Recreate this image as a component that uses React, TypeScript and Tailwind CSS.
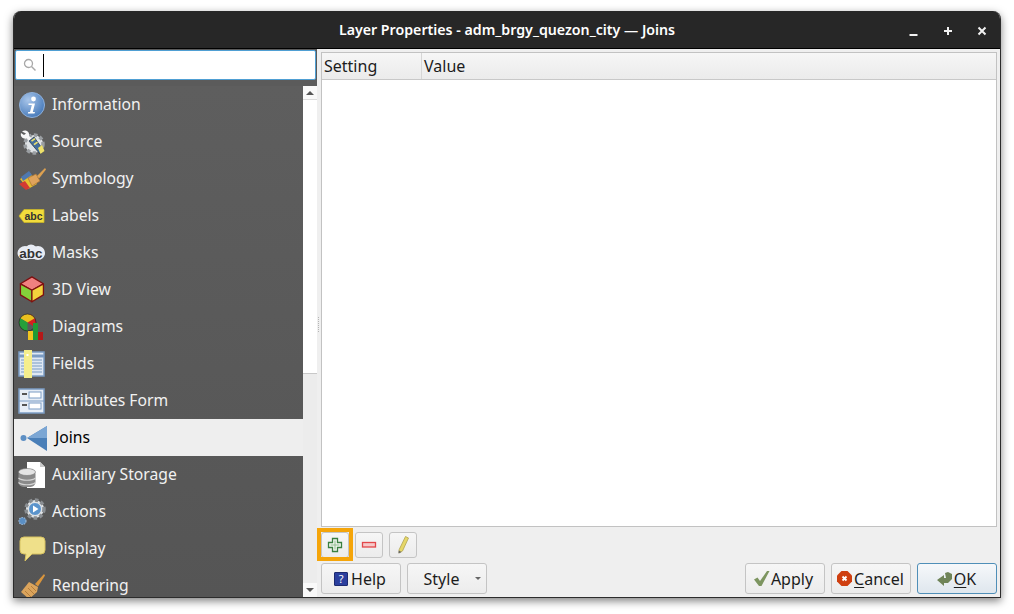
import React from "react";

const S = ({ children, w = 28, h = 28 }: { children: React.ReactNode; w?: number; h?: number }) => (
  <svg width={w} height={h} viewBox={`0 0 ${w} ${h}`} className="block shrink-0">{children}</svg>
);

const InfoIcon = () => (
  <S>
    <defs>
      <radialGradient id="ig" cx="0.35" cy="0.3" r="0.8"><stop offset="0" stopColor="#a9c6ea" /><stop offset="1" stopColor="#3f74b6" /></radialGradient>
    </defs>
    <circle cx="14" cy="14" r="12.5" fill="url(#ig)" stroke="#8fb0da" />
    <circle cx="15.5" cy="8" r="2.4" fill="#fff" />
    <path d="M10.5 12.5h6.5l-2.2 8.5h2.2l-.5 1.6H9.8l.5-1.6h1.7l1.8-6.9h-3.3z" fill="#fff" />
  </S>
);
const SourceIcon = () => (
  <S>
    <circle cx="16" cy="16" r="9" fill="#dfe3e6" stroke="#9a9ea2" strokeWidth="3.500" strokeDasharray="3.500 2.500" />
    <path d="M4 3.500c4-2.500 8 .5 7 4.500l4 3.500-2 2.500-4-3.500c-4 1-7-2-6-5.500l3 2 2-1.500z" fill="#f6f6f6" />
    <path d="M11 13l5-4 10 14-4 3z" fill="#456f9c" stroke="#22303e" strokeWidth=".7" />
    <path d="M20 20l4-3 2.500 6-4 3z" fill="#eee06a" />
    <path d="M13 12.500l3.500-2.500 1 1.300-3.500 2.500zM15.500 16l3.500-2.500 1 1.300-3.500 2.500z" fill="#eee06a" />
  </S>
);
const SymIcon = () => (
  <S>
    <path d="M2 14 12 8l7 11-9 5z" fill="#e6c030" />
    <path d="M3 12l8-6 3 4-9 6z" fill="#4e78b0" />
    <path d="M1 19l6-3 5 7-4 2z" fill="#d33a32" />
    <path d="M10 13l8-4 4 7-8 5z" fill="#dfa35c" stroke="#a87434" strokeWidth=".7" />
    <path d="M19 11l8-8 1 1.500-7 9z" fill="#dca050" />
  </S>
);
const LabelsIcon = () => (
  <S h={16}>
    <path d="M6 1.500h20v13H6L1 8z" fill="#f2dc3c" stroke="#c9b52a" strokeWidth=".8" />
    <text x="15.500" y="12" textAnchor="middle" fontSize="10.500" fontWeight="700" fontFamily="'Liberation Sans',sans-serif" fill="#333">abc</text>
  </S>
);
const MasksIcon = () => (
  <S w={30} h={18}>
    <rect x="0.500" y="3" width="27" height="12" rx="6" fill="#e8ecf4" />
    <circle cx="8" cy="9" r="7" fill="#e8ecf4" /><circle cx="14" cy="7" r="6.500" fill="#e8ecf4" /><circle cx="21" cy="9" r="7" fill="#e8ecf4" />
    <text x="14" y="13.500" textAnchor="middle" fontSize="13.500" fontWeight="700" fontFamily="'Liberation Sans',sans-serif" fill="#333">abc</text>
  </S>
);
const CubeIcon = () => (
  <S>
    <g transform="translate(1.500 0) scale(0.92)">
      <path d="M13.500 1 26 8.500l-12.500 7L1 8.500z" fill="#f08080" stroke="#7d1010" strokeWidth="1.400" strokeLinejoin="round" />
      <path d="M1 8.500l12.500 7V28L1 20.500z" fill="#84d03a" stroke="#7d1010" strokeWidth="1.400" strokeLinejoin="round" />
      <path d="M26 8.500l-12.500 7V28L26 20.500z" fill="#f4d33c" stroke="#7d1010" strokeWidth="1.400" strokeLinejoin="round" />
    </g>
  </S>
);
const DiagIcon = () => (
  <S>
    <path d="M9.500 9.500 9.500 1a8.500 8.500 0 0 1 7.300 13z" fill="#d42020" />
    <path d="M9.500 9.500 2.200 5.200a8.500 8.500 0 0 1 14.600 0z" fill="#eac01f" />
    <path d="M9.500 9.500V18a8.500 8.500 0 0 1-7.300-12.800z" fill="#25a03a" />
    <circle cx="9.500" cy="9.500" r="8.500" fill="none" stroke="#222" strokeWidth=".7" />
    <rect x="10" y="18" width="5" height="9" fill="#f2c51f" />
    <rect x="15" y="10" width="5" height="17" fill="#1f9a35" />
    <rect x="20" y="19" width="5" height="8" fill="#b41818" />
  </S>
);
const FieldsIcon = () => (
  <S>
    <rect x="1" y="2" width="25" height="24" fill="#dfe8f3" stroke="#7b9cc4" strokeWidth="1.500" />
    <path d="M1 6h25" stroke="#7b9cc4" strokeWidth="3" />
    <path d="M12 10h12M12 13h12M12 16h12M12 19h12M12 22h12M3 10h3M3 13h3M3 16h3M3 19h3M3 22h3" stroke="#7b9cc4" strokeWidth="1.200" />
    <rect x="6" y="0" width="8" height="28" fill="#f5ee8c" />
    <rect x="8.500" y="4" width="2" height="2" fill="#fff" />
  </S>
);
const FormIcon = () => (
  <S>
    <rect x="1" y="2" width="25" height="24" fill="#e6edf6" stroke="#7b9cc4" strokeWidth="1.500" />
    <path d="M1 14h25" stroke="#7b9cc4" strokeWidth="1" />
    <rect x="4" y="6" width="5" height="2" fill="#555" /><rect x="4" y="17" width="5" height="2" fill="#555" />
    <rect x="11" y="5" width="12" height="6" fill="#fff" stroke="#7b9cc4" />
    <rect x="11" y="16" width="12" height="6" fill="#fff" stroke="#7b9cc4" />
  </S>
);
const JoinsIcon = () => (
  <S w={32} h={28}>
    <circle cx="5.500" cy="14" r="3" fill="#5d8fc4" />
    <path d="M29 2v25L9 14z" fill="#4a7fb8" />
    <path d="M29 2v12H9z" fill="#7ba6d4" />
  </S>
);
const AuxIcon = () => (
  <S>
    <path d="M9 1h13l5 5v21H9z" fill="#fff" />
    <path d="M22 1l5 5h-5z" fill="#c9c9c9" />
    <rect x="0.500" y="8" width="17" height="18" rx="5" fill="#8a8a8a" />
    <ellipse cx="9" cy="11" rx="8.500" ry="3.500" fill="#e4e4e4" stroke="#777" strokeWidth=".6" />
    <path d="M.5 17c3 3 14 3 17 0M.5 21.500c3 3 14 3 17 0" stroke="#d4d4d4" strokeWidth="1.200" fill="none" />
  </S>
);
const ActionsIcon = () => (
  <S>
    <circle cx="17" cy="11" r="9" fill="#dfe3e6" stroke="#8a8e92" strokeWidth="3.500" strokeDasharray="3.500 2.500" />
    <circle cx="17" cy="11" r="6.500" fill="#5b94cc" stroke="#e6e6e6" />
    <path d="M15 7.500l5.500 3.500-5.500 3.500z" fill="#fff" />
    <circle cx="4.500" cy="23" r="3.500" fill="#5b8fc4" stroke="#9ab6d4" strokeWidth="1.200" strokeDasharray="1.500 1" />
  </S>
);
const DisplayIcon = () => (
  <S h={26}>
    <path d="M6 1h17q4 0 4 4v9q0 4-4 4H14l-7 7 1-7H6q-4 0-4-4V5q0-4 4-4z" fill="#efe08a" stroke="#d6c160" strokeWidth="1" />
  </S>
);
const BrushIcon = () => (
  <S>
    <path d="M17 12 26 2l1 1.500-7 11z" fill="#d9953d" />
    <path d="M11 10l9 5-1 5-8 7-8-7z" fill="#dba45c" />
    <path d="M7 19l6 6M10 16l6 6M13 14l5 5" stroke="#a87434" strokeWidth=".8" />
  </S>
);

const items: [string, React.ReactNode][] = [
  ["Information", <InfoIcon />],
  ["Source", <SourceIcon />],
  ["Symbology", <SymIcon />],
  ["Labels", <LabelsIcon />],
  ["Masks", <MasksIcon />],
  ["3D View", <CubeIcon />],
  ["Diagrams", <DiagIcon />],
  ["Fields", <FieldsIcon />],
  ["Attributes Form", <FormIcon />],
  ["Joins", <JoinsIcon />],
  ["Auxiliary Storage", <AuxIcon />],
  ["Actions", <ActionsIcon />],
  ["Display", <DisplayIcon />],
  ["Rendering", <BrushIcon />],
];

const btn = "h-[31px] rounded-[3px] border border-[#c4c4c4] bg-gradient-to-b from-[#f6f6f6] to-[#ececec] flex items-center justify-center text-[#1c1c1c]";
const small = "h-[26px] w-[28px] rounded-[3px] border border-[#c4c4c4] bg-gradient-to-b from-[#f6f6f6] to-[#ececec] flex items-center justify-center shrink-0";

export default function App() {
  return (
    <div className="w-[1014px] h-[614px] bg-white pt-[11px] pl-[13px] overflow-hidden font-['Noto_Sans','Open_Sans',sans-serif]">
      <div className="w-[988px] h-[587px] rounded-t-[8px] overflow-hidden flex flex-col bg-[#efefef] border-x border-b border-[#2c2c2c] shadow-[0_3px_9px_rgba(0,0,0,0.5)]">
        <div className="h-[38px] shrink-0 bg-[#272727] border-b border-black flex items-center relative">
          <div className="w-full text-center text-white font-semibold text-[14.2px]">Layer Properties - adm_brgy_quezon_city — Joins</div>
          <div className="absolute right-[12px] top-[14px] flex gap-[22px] text-white">
            <svg width="12" height="12" viewBox="0 0 12 12"><path d="M1.500 10h8" stroke="#f2f2f2" strokeWidth="2" /></svg>
            <svg width="12" height="12" viewBox="0 0 12 12"><path d="M6 2v8M2 6h8" stroke="#f2f2f2" strokeWidth="2" /></svg>
            <svg width="12" height="12" viewBox="0 0 12 12"><path d="M2.500 2.500l7 7M9.500 2.500l-7 7" stroke="#f2f2f2" strokeWidth="2" /></svg>
          </div>
        </div>
        <div className="flex-1 flex min-h-0">
          <div className="w-[303px] shrink-0 flex flex-col bg-[#5b5b5b] relative">
            <div className="h-[30px] ml-[1px] mr-[1px] mt-[1px] bg-white border border-[#4f9fd3] rounded-[2px] flex items-center pl-[7px] shrink-0">
              <svg width="14" height="14" viewBox="0 0 14 14"><circle cx="5.500" cy="5.500" r="4" fill="none" stroke="#a8a8a8" strokeWidth="1.300" /><path d="M8.500 8.500l4 4" stroke="#a8a8a8" strokeWidth="1.500" /></svg>
              <div className="w-px h-[23px] bg-black ml-[6px]" />
            </div>
            <div className="flex-1 flex min-h-0 mt-[6px]">
              <div className="w-[289px] shrink-0 overflow-hidden bg-gradient-to-b from-[#5e5e5e] to-[#555555]">
                {items.map(([label, icon]) => {
                  const sel = label === "Joins";
                  return (
                    <div key={label} className={`h-[37px] flex items-center ${sel ? "bg-[#eeeeee] text-black" : "text-[#f1f1f1]"}`}>
                      <div className={`h-full shrink-0 flex items-center ${sel ? "w-[41px] pl-[4px]" : label === "Masks" ? "w-[38px] pl-[3px]" : "w-[38px] pl-[4px]"}`}>{icon}</div>
                      <span className="text-[15.7px] leading-none">{label}</span>
                    </div>
                  );
                })}
              </div>
              <div className="w-[14px] shrink-0 bg-[#f9f9f9] flex flex-col">
                <div className="h-[14px] flex items-center justify-center border-b border-[#dcdcdc] shrink-0">
                  <div className="w-0 h-0 border-l-[4px] border-r-[4px] border-b-[4px] border-transparent border-b-[#555]" />
                </div>
                <div className="h-[273px] bg-white" />
                <div className="flex-1 bg-[#ececec] border-t border-[#c8c8c8]" />
                <div className="h-[14px] flex items-center justify-center bg-[#f9f9f9] shrink-0">
                  <div className="w-0 h-0 border-l-[4px] border-r-[4px] border-t-[4px] border-transparent border-t-[#555]" />
                </div>
              </div>
            </div>
          </div>
          <div className="flex-1 min-w-0 flex flex-col pl-[4px] pr-[3px] pt-[3px] relative">
            <div className="h-[475px] shrink-0 bg-white border border-[#c2c2c2] flex flex-col">
              <div className="h-[27px] shrink-0 flex border-b border-[#c8c8c8] bg-gradient-to-b from-[#f6f6f6] to-[#ebebeb] text-[16px] text-[#1c1c1c]">
                <div className="w-[100px] border-r border-[#d6d6d6] pl-[2px] flex items-center">Setting</div>
                <div className="pl-[2px] flex items-center">Value</div>
              </div>
            </div>
            <div className="flex gap-[6px] mt-[5px] h-[26px]">
              <div className={small}>
                <svg width="16" height="16" viewBox="0 0 16 16"><path d="M5.500 1.500h5v4h4v5h-4v4h-5v-4h-4v-5h4z" fill="#f4f8f2" stroke="#3a7f40" strokeWidth="1.300" /><path d="M8 3.500v9M3.500 8h9" stroke="#8fbb8e" strokeWidth="1" /></svg>
              </div>
              <div className={small}>
                <svg width="16" height="8" viewBox="0 0 16 8"><rect x="1.500" y="1.500" width="13" height="4.500" fill="#f6c9c9" stroke="#e2474a" strokeWidth="1.300" /></svg>
              </div>
              <div className={small}>
                <svg width="14" height="20" viewBox="0 0 14 20"><path d="M9.500 1.500l3 1.500-6 13-3.500 2 .2-3.500z" fill="#e6d768" stroke="#b0a350" strokeWidth=".8" /><path d="M2.700 15.500l2.800 1.500-3 1.500z" fill="#666" /></svg>
              </div>
            </div>
            <div className="flex mt-[5px] text-[16px] h-[31px]">
              <div className={`${btn} w-[80px] gap-[3px] pr-[2px]`}>
                <span className="w-[14px] h-[14px] bg-[#2b3f9e] border border-[#1d2a70] rounded-[1px] text-white text-[11px] leading-none flex items-center justify-center">?</span>
                <span>Help</span>
              </div>
              <div className={`${btn} w-[80px] ml-[6px] relative pr-[11px]`}>
                Style
                <div className="absolute right-[5px] top-[13px] w-0 h-0 border-l-[3px] border-r-[3px] border-t-[3px] border-transparent border-t-[#666]" />
              </div>
              <div className="flex-1" />
              <div className={`${btn} w-[80px] gap-[1px] pr-[4px]`}>
                <svg width="17" height="17" viewBox="0 0 17 17"><path d="M1 9.500l3.500-2 2.500 3.500 7-10h2.500L8.500 16H6z" fill="#7d9560" /></svg>
                <span>Apply</span>
              </div>
              <div className={`${btn} w-[80px] ml-[6px] gap-[1px] pr-[2px]`}>
                <svg width="17" height="17" viewBox="0 0 17 17"><path d="M5.500 1h6L16 5.500v6L11.500 16h-6L1 11.500v-6z" fill="#cf3f10" /><path d="M6.500 6.500l4 4M10.500 6.500l-4 4" stroke="#fff" strokeWidth="1.800" /></svg>
                <span><span className="underline underline-offset-2">C</span>ancel</span>
              </div>
              <div className="h-[31px] w-[80px] ml-[6px] rounded-[3px] border border-[#4f8fb8] bg-gradient-to-b from-[#f6f8fa] to-[#dfe7ee] flex items-center justify-center gap-[1px] pr-[2px] text-[#1c1c1c]">
                <svg width="17" height="16" viewBox="0 0 17 16"><path d="M9 2l3-1 4 2v5l-4 4H8v3L1 9l7-5v3h2z" fill="#6f8458" /></svg>
                <span><span className="underline underline-offset-2">O</span>K</span>
              </div>
            </div>
            <div className="absolute left-[1px] top-[268px] flex flex-col gap-px">
              {[0,1,2,3,4,5,6,7].map(i => <div key={i} className="w-px h-px bg-[#b5b5b5]" />)}
            </div>
            <div className="absolute left-[0px] top-[479px] w-[36px] h-[33px] border-[4px] border-[#f5a50a] pointer-events-none" />
          </div>
        </div>
      </div>
    </div>
  );
}
